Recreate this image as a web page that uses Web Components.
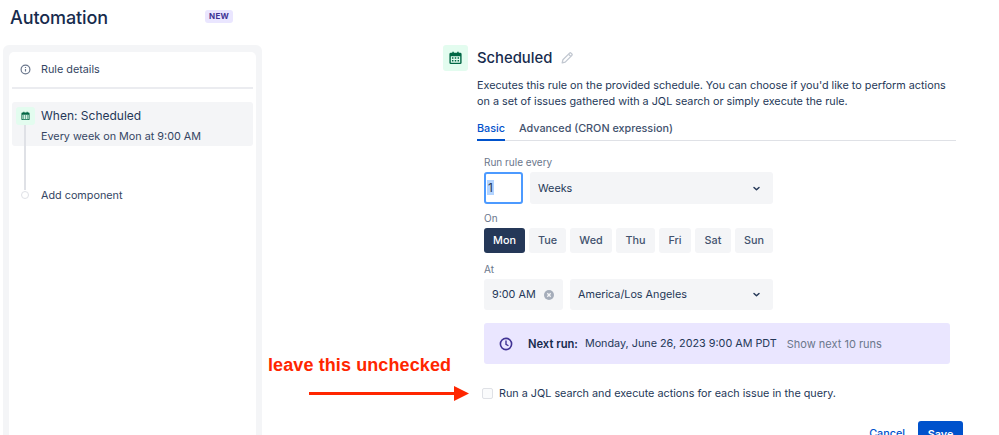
<!DOCTYPE html>
<html lang="en">
<head>
<meta charset="utf-8">
<title>Automation</title>
<style>
  html, body { margin: 0; height: 435px; overflow: hidden; background: #fff; }
  body { font-family: Inter, "Liberation Sans", sans-serif; color: #253858; }
</style>
</head>
<body>
<automation-page></automation-page>

<script>
const CALENDAR = `<svg viewBox="0 0 16 16" width="100%" height="100%">
  <path fill="currentColor" fill-rule="evenodd" d="M3 2.5h1.6V1.2h1.6v1.3h3.6V1.2h1.6v1.3H13a1.5 1.5 0 0 1 1.5 1.5v9a1.5 1.5 0 0 1-1.5 1.5H3A1.5 1.5 0 0 1 1.5 13V4A1.5 1.5 0 0 1 3 2.5zM3 6v7h10V6H3z"/>
  <path fill="currentColor" d="M4.2 7.2h1.6v1.6H4.2zM7.2 7.2h1.6v1.6H7.2zM10.2 7.2h1.6v1.6h-1.6zM4.2 10.2h1.6v1.6H4.2zM7.2 10.2h1.6v1.6H7.2zM10.2 10.2h1.6v1.6h-1.6z"/>
</svg>`;

const CHEVRON = `<svg viewBox="0 0 10 10" width="9" height="9"><path d="M2.2 3.8 5 6.5l2.8-2.7" fill="none" stroke="#253858" stroke-width="1.6" stroke-linecap="round" stroke-linejoin="round"/></svg>`;

class AutomationPage extends HTMLElement {
  constructor() {
    super();
    this.attachShadow({mode: 'open'}).innerHTML = `
    <style>
      :host { display: block; position: relative; width: 999px; height: 435px; overflow: hidden; }
      .head { display: flex; align-items: center; height: 35px; padding-left: 10px; }
      h1 { margin: 0; width: 195px; font-size: 18px; line-height: 35px; font-weight: 500; color: #172b4d; letter-spacing: -0.1px; }
      .new { margin-top: -2px; font-size: 8px; font-weight: 700; line-height: 13px; padding: 0 4px; letter-spacing: .3px; color: #403294; background: #eae6ff; border-radius: 3px; }
      .body { display: flex; height: 400px; padding: 10px 0 0 3px; box-sizing: border-box; }
      schedule-panel { margin-left: 181px; }
      red-note { position: absolute; left: 268px; top: 355px; }
    </style>
    <div class="head"><h1>Automation</h1><span class="new">NEW</span></div>
    <div class="body">
      <rule-sidebar></rule-sidebar>
      <schedule-panel></schedule-panel>
    </div>
    <red-note></red-note>`;
  }
}

class RuleSidebar extends HTMLElement {
  constructor() {
    super();
    this.attachShadow({mode: 'open'}).innerHTML = `
    <style>
      :host { display: block; width: 259px; height: 400px; box-sizing: border-box; padding: 7px 6px 0; background: #f4f5f7; border-radius: 6px 6px 0 0; }
      .card { height: 100%; padding: 0 3px; background: #fff; border-radius: 5px 5px 0 0; font-size: 10.8px; color: #344563; }
      .details { display: flex; align-items: center; height: 35px; padding-left: 8px; gap: 10px; border-bottom: 2px solid #ebecf0; }
      .details svg { width: 11px; height: 11px; }
      .when { position: relative; height: 44px; margin-top: 13px; padding-left: 29px; background: #f4f5f7; border-radius: 3px; }
      .when b { display: block; padding-top: 5px; font-size: 12px; line-height: 17px; font-weight: 400; color: #253858; }
      .when span { display: block; margin-top: 5px; line-height: 15px; }
      .tile { position: absolute; left: 4px; top: 5px; width: 19px; height: 18px; padding: 4px; box-sizing: border-box; background: #e3fcef; border-radius: 3px; color: #006644; }
      .line { position: absolute; left: 12px; top: 23px; width: 2px; height: 65px; background: #dfe1e6; }
      .add { display: flex; align-items: center; gap: 12px; padding-left: 9px; height: 12px; margin-top: 43px; }
      .dot { width: 6px; height: 6px; border: 1.5px solid #dfe1e6; border-radius: 50%; background: #fff; flex: none; position: relative; }
    </style>
    <div class="card">
      <div class="details">
        <svg viewBox="0 0 12 12"><circle cx="6" cy="6" r="4.8" fill="none" stroke="#6b778c" stroke-width="1.3"/><path d="M6 5.5v2.6M6 3.4v1" stroke="#6b778c" stroke-width="1.3"/></svg>
        <span>Rule details</span>
      </div>
      <div class="when">
        <div class="line"></div>
        <div class="tile">${CALENDAR}</div>
        <b>When: Scheduled</b>
        <span>Every week on Mon at 9:00 AM</span>
      </div>
      <div class="add"><i class="dot"></i><span>Add component</span></div>
    </div>`;
  }
}

class SchedulePanel extends HTMLElement {
  constructor() {
    super();
    this.attachShadow({mode: 'open'}).innerHTML = `
    <style>
      :host { display: block; width: 520px; font-size: 10.8px; color: #253858; }
      .title { display: flex; align-items: center; height: 26px; }
      .icon { width: 25px; height: 26px; padding: 5px; box-sizing: border-box; background: #e3fcef; border-radius: 3px; color: #006644; }
      h2 { margin: 0 8px 0 9px; font-size: 14.8px; font-weight: 500; color: #172b4d; }
      .pad { padding-left: 34px; }
      p { margin: 7px 0 0; line-height: 16px; width: 475px; }
      .tabs { display: flex; gap: 14px; width: 479px; height: 25px; margin-top: 6px; box-sizing: border-box; border-bottom: 1px solid #dfe1e6; font-weight: 500; line-height: 20px; color: #42526e; }
      .tabs span { height: 25px; padding-top: 3px; box-sizing: border-box; }
      .tabs .on { color: #0052cc; border-bottom: 2px solid #0052cc; }
      form { width: 289px; margin: 0 0 0 7px; padding-top: 15px; display: block; }
      label { display: block; font-size: 10px; line-height: 13px; color: #6b778c; }
      .row { display: flex; gap: 7px; margin-top: 3px; height: 32px; }
      .row.low { height: 31px; }
      .num { width: 39px; box-sizing: border-box; border: 2px solid #4c9aff; border-radius: 3px; padding: 6px 0 0 1px; font-size: 12px; line-height: 16px; }
      .num mark { background: #b3d4ff; color: #253858; padding: 0 1px; }
      .days { display: flex; gap: 4px; margin-top: 3px; height: 25px; }
      .gap { margin-top: 8px; }
      .days + .gap { margin-top: 10px; }
      .next { display: flex; align-items: center; width: 466px; height: 41px; margin: 13px 0 0 7px; box-sizing: border-box; padding-left: 15px; background: #eae6ff; border-radius: 3px; color: #253858; white-space: nowrap; }
      .next svg { width: 14px; height: 14px; margin-right: 15px; }
      .next b { font-size: 11.2px; font-weight: 600; margin-right: 7px; color: #172b4d; }
      .next em { font-size: 11px; font-style: normal; color: #6b778c; margin-left: 10px; }
      .check { display: flex; align-items: center; gap: 6px; margin: 22px 0 0 5px; height: 14px; }
      .check i { width: 11px; height: 11px; box-sizing: border-box; border: 1.5px solid #dfe1e6; border-radius: 2px; background: #fafbfc; }
      .actions { display: flex; justify-content: flex-end; align-items: flex-start; gap: 13px; width: 486px; margin-top: 21px; font-weight: 500; }
      .actions a { color: #0052cc; padding-top: 6px; }
      .actions button { width: 45px; height: 30px; padding: 0 0 4px; font: inherit; font-weight: 600; color: #fff; background: #0052cc; border: 0; border-radius: 3px; }
    </style>
    <div class="title">
      <div class="icon">${CALENDAR}</div>
      <h2>Scheduled</h2>
      <svg width="14" height="14" viewBox="0 0 14 14"><path d="M2.2 11.8l.7-3L9.6 2.1a1 1 0 0 1 1.4 0l.9.9a1 1 0 0 1 0 1.4L5.2 11.1z" fill="none" stroke="#c1c7d0" stroke-width="1.3" stroke-linejoin="round"/><path d="M8.6 3.2l2.2 2.2" stroke="#c1c7d0" stroke-width="1.3"/></svg>
    </div>
    <div class="pad">
      <p>Executes this rule on the provided schedule. You can choose if you'd like to perform actions on a set of issues gathered with a JQL search or simply execute the rule.</p>
      <div class="tabs"><span class="on">Basic</span><span>Advanced (CRON expression)</span></div>
      <form>
        <label>Run rule every</label>
        <div class="row">
          <div class="num"><mark>1</mark></div>
          <field-box chevron>Weeks</field-box>
        </div>
        <label class="gap">On</label>
        <div class="days">
          <day-button width="41" active>Mon</day-button>
          <day-button width="37">Tue</day-button>
          <day-button width="42">Wed</day-button>
          <day-button width="39">Thu</day-button>
          <day-button width="32">Fri</day-button>
          <day-button width="36">Sat</day-button>
          <day-button width="38">Sun</day-button>
        </div>
        <label class="gap">At</label>
        <div class="row low">
          <field-box width="79" clear>9:00 AM</field-box>
          <field-box chevron>America/Los Angeles</field-box>
        </div>
      </form>
      <div class="next">
        <svg viewBox="0 0 14 14"><circle cx="7" cy="7" r="5.6" fill="none" stroke="#403294" stroke-width="1.6"/><path d="M7 4v3.3l2 1.2" fill="none" stroke="#403294" stroke-width="1.4" stroke-linecap="round"/></svg>
        <b>Next run:</b><span>Monday, June 26, 2023 9:00 AM PDT</span><em>Show next 10 runs</em>
      </div>
      <div class="check"><i></i><span>Run a JQL search and execute actions for each issue in the query.</span></div>
      <div class="actions"><a>Cancel</a><button type="button">Save</button></div>
    </div>`;
  }
}

class FieldBox extends HTMLElement {
  constructor() {
    super();
    this.attachShadow({mode: 'open'});
  }
  connectedCallback() {
    const w = this.getAttribute('width');
    let tail = '';
    if (this.hasAttribute('chevron')) tail = CHEVRON;
    if (this.hasAttribute('clear')) {
      tail = `<svg viewBox="0 0 10 10" width="10" height="10"><circle cx="5" cy="5" r="5" fill="#a5adba"/><path d="M3.3 3.3l3.4 3.4M6.7 3.3 3.3 6.7" stroke="#f4f5f7" stroke-width="1.3"/></svg>`;
    }
    this.shadowRoot.innerHTML = `
    <style>
      :host { display: flex; align-items: center; justify-content: space-between; box-sizing: border-box;
        padding: 0 ${this.hasAttribute('clear') ? 9 : 12}px 0 8px; background: #f4f5f7; border-radius: 3px;
        ${w ? 'width:' + w + 'px; flex: none;' : 'flex: 1;'} font-size: 10.8px; color: #253858; }
      svg { display: block; }
    </style>
    <span><slot></slot></span>${tail}`;
  }
}

class DayButton extends HTMLElement {
  constructor() {
    super();
    this.attachShadow({mode: 'open'});
  }
  connectedCallback() {
    const on = this.hasAttribute('active');
    this.shadowRoot.innerHTML = `
    <style>
      :host { display: flex; align-items: center; justify-content: center; box-sizing: border-box; height: 25px;
        width: ${this.getAttribute('width')}px; border-radius: 3px; font-size: 10.8px; font-weight: 500;
        background: ${on ? '#253858' : '#f4f5f7'}; color: ${on ? '#fff' : '#42526e'}; }
    </style>
    <slot></slot>`;
  }
}

class RedNote extends HTMLElement {
  constructor() {
    super();
    this.attachShadow({mode: 'open'}).innerHTML = `
    <style>
      :host { display: block; width: 205px; }
      div { font: 700 18px/20px "Liberation Sans", Arial, sans-serif; color: #ff2600; letter-spacing: .1px; white-space: nowrap; }
      svg { display: block; margin: 11px 0 0 41px; }
    </style>
    <div>leave this unchecked</div>
    <svg width="161" height="16" viewBox="0 0 161 16"><path d="M0 7.5h148" stroke="#ff2600" stroke-width="3"/><path d="M145 0l15 7.5-15 7.5z" fill="#ff2600"/></svg>`;
  }
}

customElements.define('field-box', FieldBox);
customElements.define('day-button', DayButton);
customElements.define('red-note', RedNote);
customElements.define('rule-sidebar', RuleSidebar);
customElements.define('schedule-panel', SchedulePanel);
customElements.define('automation-page', AutomationPage);
</script>
</body>
</html>
